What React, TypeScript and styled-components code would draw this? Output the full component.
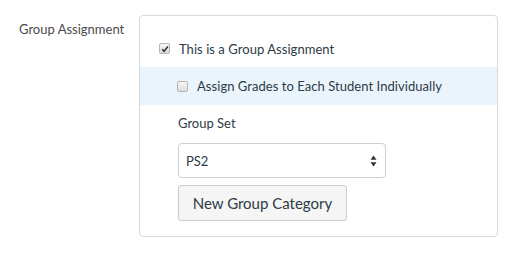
import React from 'react';
import styled, { createGlobalStyle } from 'styled-components';

const GlobalStyle = createGlobalStyle`
  html, body {
    margin: 0;
    padding: 0;
    background: #ffffff;
  }
  body {
    font-family: Lato, "Open Sans", "Liberation Sans", sans-serif;
    color: #2d3b45;
  }
`;

interface CheckboxProps {
  checked?: boolean;
}

function Checkbox({ checked }: CheckboxProps): JSX.Element {
  return (
    <Box>
      {checked && (
        <svg width="8" height="8" viewBox="0 0 8 8">
          <path d="M1.2 4.3 L3.1 6.2 L6.9 1.6" fill="none" stroke="#333" strokeWidth="1.6" />
        </svg>
      )}
    </Box>
  );
}

function App(): JSX.Element {
  return (
    <>
      <GlobalStyle />
      <Page>
        <FieldLabel>Group Assignment</FieldLabel>
        <Panel>
          <CheckRow>
            <Checkbox checked />
            <CheckText>This is a Group Assignment</CheckText>
          </CheckRow>
          <CheckRow $nested $highlight>
            <Checkbox />
            <CheckText>Assign Grades to Each Student Individually</CheckText>
          </CheckRow>
          <Section>
            <SectionLabel>Group Set</SectionLabel>
            <Select>
              <span>PS2</span>
              <svg width="7" height="12" viewBox="0 0 7 12">
                <path d="M3.5 0.5 L6.5 4.8 L0.5 4.8 Z" fill="#333" />
                <path d="M3.5 11.5 L6.5 7.2 L0.5 7.2 Z" fill="#333" />
              </svg>
            </Select>
            <Button type="button">New Group Category</Button>
          </Section>
        </Panel>
      </Page>
    </>
  );
}

const Page = styled.div`
  display: flex;
  align-items: flex-start;
  padding-top: 15px;
`;

const FieldLabel = styled.div`
  width: 120px;
  padding-left: 19px;
  padding-top: 6px;
  font-size: 13px;
  line-height: 16px;
  color: #4a4a4a;
`;

const Panel = styled.div`
  width: 357px;
  border: 1px solid #d9d9d9;
  border-radius: 4px;
  padding: 14px 0 15px;
`;

const CheckRow = styled.div<{ $nested?: boolean; $highlight?: boolean }>`
  display: flex;
  align-items: center;
  height: ${({ $nested }) => ($nested ? '38px' : '37px')};
  padding-left: ${({ $nested }) => ($nested ? '37px' : '19px')};
  background: ${({ $highlight }) => ($highlight ? '#e9f4fd' : 'transparent')};
`;

const Box = styled.span`
  width: 9px;
  height: 9px;
  border: 1px solid #b5b5b5;
  border-radius: 2px;
  background: linear-gradient(#f7f7f7, #dcdcdc);
  display: flex;
  align-items: center;
  justify-content: center;
  flex-shrink: 0;
`;

const CheckText = styled.span`
  margin-left: 9px;
  font-size: 13px;
  line-height: 16px;
  letter-spacing: 0.05px;
`;

const Section = styled.div`
  padding-left: 38px;
  padding-top: 10px;
  display: flex;
  flex-direction: column;
  align-items: flex-start;
`;

const SectionLabel = styled.div`
  font-size: 13px;
  line-height: 16px;
`;

const Select = styled.div`
  margin-top: 12px;
  box-sizing: border-box;
  width: 208px;
  height: 35px;
  border: 1px solid #cfcfcf;
  border-radius: 4px;
  display: flex;
  align-items: center;
  justify-content: space-between;
  padding: 0 8px 0 7px;
  font-size: 13px;
`;

const Button = styled.button`
  margin-top: 7px;
  box-sizing: border-box;
  width: 169px;
  height: 36px;
  border: 1px solid #c7cdd1;
  border-radius: 3px;
  background: #f5f5f5;
  color: #2d3b45;
  font-family: inherit;
  font-size: 15px;
  padding: 0;
`;

export default App;
